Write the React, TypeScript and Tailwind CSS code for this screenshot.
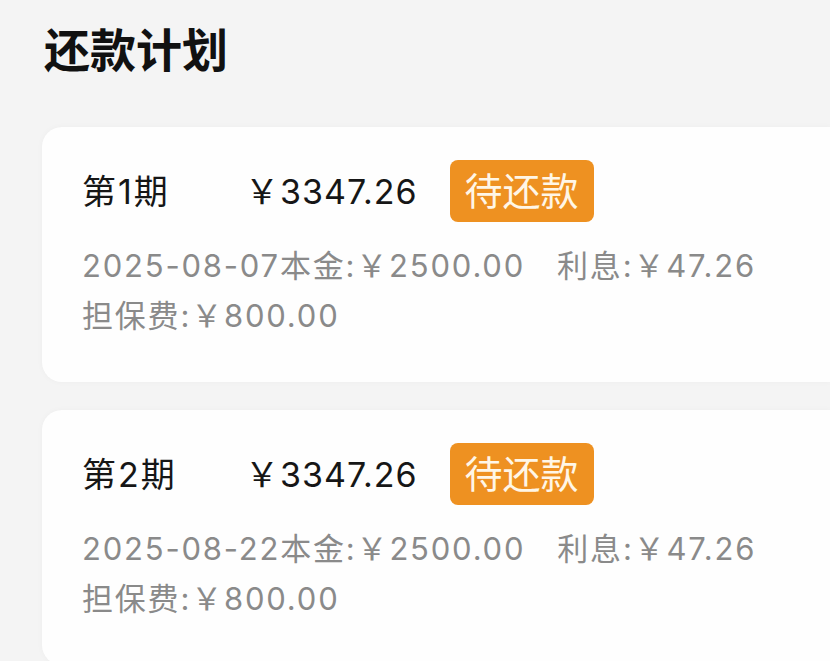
const font = "font-['Inter','Noto_Sans_CJK_SC',sans-serif]";

type Plan = {
  period: string;
  amount: string;
  date: string;
  principal: string;
  interest: string;
  fee: string;
};

const plans: Plan[] = [
  { period: "第1期", amount: "3347.26", date: "2025-08-07", principal: "2500.00", interest: "47.26", fee: "800.00" },
  { period: "第2期", amount: "3347.26", date: "2025-08-22", principal: "2500.00", interest: "47.26", fee: "800.00" },
];

function PlanCard({ plan }: { plan: Plan }) {
  return (
    <div className="bg-[#fefefe] rounded-l-[20px] pl-10 pt-[33px] pb-[41px] shadow-[0_0_6px_rgba(0,0,0,0.03)]">
      <div className="flex items-center h-[62px]">
        <div className="w-[163px] text-[34px] tracking-[2px] text-[#161616]">{plan.period}</div>
        <div className="text-[34px] tracking-[1px] text-[#161616]">￥{plan.amount}</div>
        <div className="ml-[32px] h-[62px] px-[15px] flex items-center rounded-lg bg-[#ee9121] text-[38px] text-[#fff6e6]">
          待还款
        </div>
      </div>
      <div className="mt-[19px] text-[31px] tracking-[1.8px] leading-[50px] text-[#8a8a8a]">
        <div>
          {plan.date}本金:￥{plan.principal}
          <span className="ml-[32px]">利息:￥{plan.interest}</span>
        </div>
        <div>担保费:￥{plan.fee}</div>
      </div>
    </div>
  );
}

export default function App() {
  return (
    <div className={`${font} w-[830px] h-[661px] bg-[#f4f4f4] overflow-hidden flex flex-col`}>
      <h1 className="pl-11 pt-[23px] text-[46px] leading-[55px] font-bold text-[#111]">还款计划</h1>
      <div className="mt-[49px] ml-[42px] flex flex-col gap-[28px] flex-1">
        {plans.map((p) => (
          <PlanCard plan={p} key={p.period} />
        ))}
      </div>
      <div className="h-[6px] shrink-0 bg-gradient-to-r from-[#2a2a2a] via-[#4a3a30] to-[#b8a090]" />
    </div>
  );
}
